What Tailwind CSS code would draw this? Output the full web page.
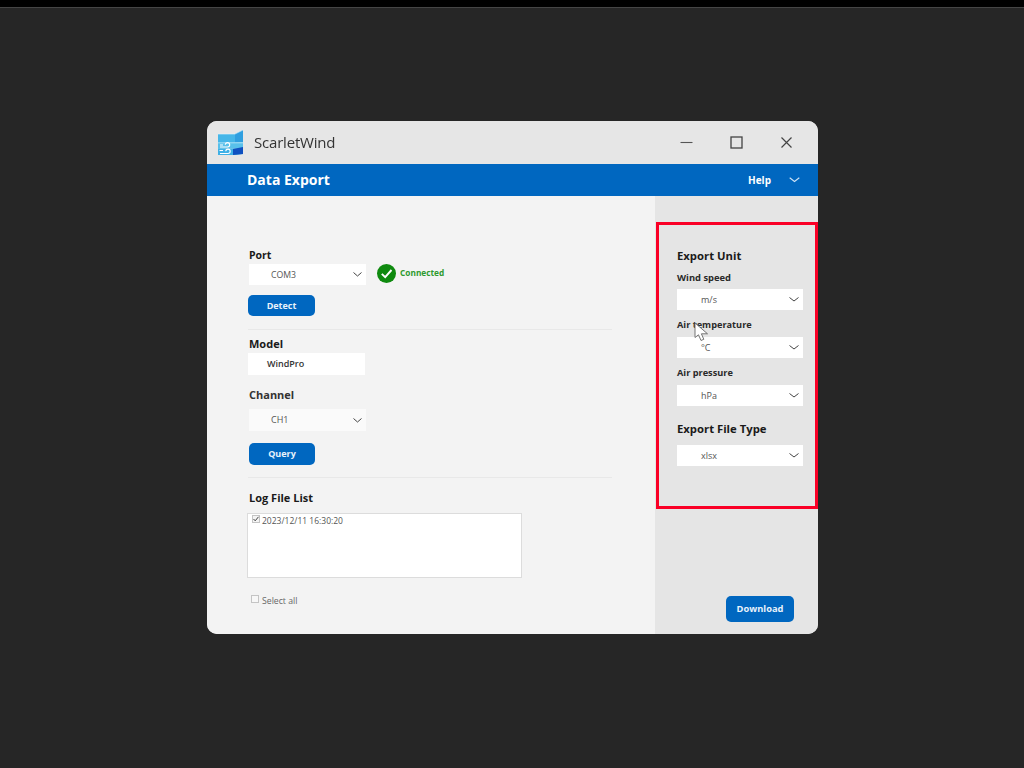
<!DOCTYPE html>
<html>
<head>
<meta charset="utf-8">
<script src="https://cdn.jsdelivr.net/npm/@tailwindcss/browser@4"></script>
</head>
<body class="w-[1024px] h-[768px] overflow-hidden bg-[#262626] font-['Open_Sans','Noto_Sans',sans-serif]">
<div class="h-[7px] bg-black"></div>
<div class="h-px bg-[#454545]"></div>
<div class="relative w-[611px] h-[513px] ml-[207px] mt-[113px] rounded-[10px] overflow-hidden flex flex-col bg-[#f3f3f3] blur-[0.35px]">
  <!-- title bar -->
  <div class="h-[43px] bg-[#e6e6e6] flex items-center pl-[11px]">
    <svg class="w-[26px] h-[27px]" viewBox="0 0 26 27">
      <path d="M0 5 L17 5 L25 1 L25 13 L17 14 L0 14Z" fill="#45b6e8"/>
      <path d="M17 5 L25 1 L25 13 L17 14Z" fill="#2f9fe0"/>
      <path d="M0 14 L25 13 L25 19 L0 20Z" fill="#58c0ea"/>
      <path d="M0 20 L25 19 L25 25 L17 26 L0 26Z" fill="#3fb0e6"/>
      <path d="M15 20 L25 18 L25 25 L15 26Z" fill="#0f50c0"/>
      <path d="M0 5 H17 L25 1 M0 13.8 H25" stroke="#e8f6fd" stroke-width="0.6" fill="none"/>
      <path d="M2 18 H9.5 a2.2 2.2 0 1 0 -2.2 -2.2 M2 16 H5 M1.5 21.5 H5 M2 24.5 H10 a2.2 2.2 0 1 0 -2.2 -2.2" stroke="#fff" stroke-width="1.1" fill="none"/>
    </svg>
    <span class="ml-[10px] text-[15px] leading-none text-[#333] tracking-[-0.2px]">ScarletWind</span>
    <div class="ml-auto flex items-center pr-[25px] gap-[37px]">
      <svg class="w-[13px] h-[13px]" viewBox="0 0 13 13"><path d="M0.5 6.5 H12.5" stroke="#555" stroke-width="1.1"/></svg>
      <svg class="w-[13px] h-[13px]" viewBox="0 0 13 13"><rect x="1" y="1" width="11" height="11" fill="none" stroke="#444" stroke-width="1.3"/></svg>
      <svg class="w-[13px] h-[13px]" viewBox="0 0 13 13"><path d="M1.5 1.5 L11.5 11.5 M11.5 1.5 L1.5 11.5" stroke="#444" stroke-width="1.2"/></svg>
    </div>
  </div>
  <!-- blue header -->
  <div class="h-[32px] bg-[#0067c0] flex items-center pl-[40px] pr-[18px] text-white">
    <span class="text-[14px] font-bold leading-none">Data Export</span>
    <span class="ml-auto text-[10px] font-bold leading-none">Help</span>
    <svg class="ml-[18px] w-[11px] h-[6px]" viewBox="0 0 11 6"><path d="M0.7 0.7 L5.5 4.5 L10.3 0.7" fill="none" stroke="#cfe3f5" stroke-width="1.1"/></svg>
  </div>
  <div class="flex-1 flex min-h-0">
    <!-- left pane -->
    <div class="w-[448px] bg-[#f3f3f3] pl-[41px] pt-[51px]">
      <div class="pl-px text-[10.5px] font-bold leading-4 text-[#1a1a1a]">Port</div>
      <div class="flex items-center mt-px">
        <div class="ml-px w-[117px] h-[21px] bg-white flex items-center pl-[22px] pr-[4px] text-[8.7px] text-[#555]">
          <span class="mt-[3px]">COM3</span>
          <svg class="ml-auto w-[9px] h-[5px]" viewBox="0 0 9 5"><path d="M0.5 0.5 L4.5 4 L8.5 0.5" fill="none" stroke="#444" stroke-width="1"/></svg>
        </div>
        <svg class="ml-[11px] w-[19px] h-[19px] -mt-[3px]" viewBox="0 0 19 19"><circle cx="9.5" cy="9.5" r="9.5" fill="#0f8a0f"/><path d="M4.8 9.8 L8.2 13.2 L14.5 6" fill="none" stroke="#fff" stroke-width="1.9"/></svg>
        <span class="ml-[4px] -mt-[3px] text-[8.3px] font-bold text-[#2e9a2e]">Connected</span>
      </div>
      <div class="mt-[10px] w-[67px] h-[21px] rounded-[5px] bg-[#0067c0] flex items-center justify-center text-[9px] font-bold text-[#e8f2fb]">Detect</div>
      <div class="mt-[13px] h-px w-[364px] bg-[#e8e8e8]"></div>
      <div class="mt-[6px] pb-px pl-px text-[11px] font-bold leading-4 text-[#1a1a1a]">Model</div>
      <div class="w-[117px] h-[22px] bg-white flex items-center pl-[19px] text-[9px] font-semibold text-[#333]">WindPro</div>
      <div class="mt-[12px] pl-px text-[11px] font-bold leading-4 text-[#333]">Channel</div>
      <div class="mt-[6px] ml-px w-[117px] h-[22px] bg-[#fafafa] flex items-center pl-[22px] pr-[4px] text-[9px] text-[#555]">
        <span>CH1</span>
        <svg class="ml-auto w-[9px] h-[5px]" viewBox="0 0 9 5"><path d="M0.5 0.5 L4.5 4 L8.5 0.5" fill="none" stroke="#444" stroke-width="1"/></svg>
      </div>
      <div class="mt-[12px] ml-px w-[66px] h-[22px] rounded-[5px] bg-[#0067c0] flex items-center justify-center text-[9px] font-bold text-[#e8f2fb]">Query</div>
      <div class="mt-[12px] h-px w-[364px] bg-[#e8e8e8]"></div>
      <div class="mt-[12px] pl-px text-[11px] font-bold leading-4 text-[#1a1a1a]">Log File List</div>
      <div class="mt-[7px] -ml-px w-[275px] h-[65px] bg-white border border-[#dcdcdc] pl-[4px] pt-px flex items-start text-[8.5px] leading-[11px] text-[#555]">
        <div class="w-[8px] h-[8px] bg-[#f4f4f4] border border-[#c4c4c4] flex items-center justify-center">
          <svg class="w-[8px] h-[8px] shrink-0" viewBox="0 0 8 8"><path d="M1.5 4 L3.2 5.8 L6.5 1.8" fill="none" stroke="#444" stroke-width="1"/></svg>
        </div>
        <span class="ml-[2px]">2023/12/11 16:30:20</span>
      </div>
      <div class="mt-[17px] ml-[3px] flex items-start text-[8.7px] leading-[11px] text-[#666]">
        <div class="w-[8px] h-[8px] bg-[#f7f7f7] border border-[#c4c4c4]"></div>
        <span class="ml-[3px] mt-[1px]">Select all</span>
      </div>
    </div>
    <!-- right pane -->
    <div class="flex-1 bg-[#e5e5e5] pl-[22px] pr-[15px] pt-[52px] flex flex-col">
      <div class="text-[11.3px] font-bold leading-4 text-[#1a1a1a]">Export Unit</div>
      <div class="mt-[6px] text-[9.4px] font-bold leading-4 text-[#2a2a2a]">Wind speed</div>
      <div class="mt-[3px] h-[21px] bg-white flex items-center pl-[24px] pr-[4px] text-[9px] text-[#555]"><span>m/s</span><svg class="ml-auto w-[10px] h-[5px]" viewBox="0 0 10 5"><path d="M0.5 0.5 L5 4 L9.5 0.5" fill="none" stroke="#444" stroke-width="1"/></svg></div>
      <div class="mt-[7px] text-[9.2px] font-bold leading-4 text-[#2a2a2a]">Air temperature</div>
      <div class="mt-[4px] h-[21px] bg-white flex items-center pl-[24px] pr-[4px] text-[9px] text-[#555]"><span>°C</span><svg class="ml-auto w-[10px] h-[5px]" viewBox="0 0 10 5"><path d="M0.5 0.5 L5 4 L9.5 0.5" fill="none" stroke="#444" stroke-width="1"/></svg></div>
      <div class="mt-[7px] text-[9.2px] font-bold leading-4 text-[#2a2a2a]">Air pressure</div>
      <div class="mt-[4px] h-[21px] bg-white flex items-center pl-[24px] pr-[4px] text-[9px] text-[#555]"><span>hPa</span><svg class="ml-auto w-[10px] h-[5px]" viewBox="0 0 10 5"><path d="M0.5 0.5 L5 4 L9.5 0.5" fill="none" stroke="#444" stroke-width="1"/></svg></div>
      <div class="mt-[15px] text-[11.3px] font-bold leading-4 text-[#1a1a1a]">Export File Type</div>
      <div class="mt-[8px] h-[21px] bg-white flex items-center pl-[24px] pr-[4px] text-[9px] text-[#555]"><span>xlsx</span><svg class="ml-auto w-[10px] h-[5px]" viewBox="0 0 10 5"><path d="M0.5 0.5 L5 4 L9.5 0.5" fill="none" stroke="#444" stroke-width="1"/></svg></div>
      <div class="mt-auto mb-[12px] ml-[49px] w-[68px] h-[26px] rounded-[5px] bg-[#0067c0] flex items-center justify-center text-[9.3px] font-bold text-[#e8f2fb]">Download</div>
    </div>
  </div>
  <!-- red highlight overlay -->
  <div class="absolute left-[449px] top-[101px] w-[162px] h-[287px] border-[3px] border-[#fa0026]"></div>
  <!-- mouse cursor -->
  <svg class="absolute left-[487px] top-[201px] w-[15px] h-[20px]" viewBox="0 0 15 20"><path d="M1 1 L1 15.5 L4.5 12.8 L7 18.5 L9.8 17.3 L7.4 11.8 L13.5 11.8Z" fill="#fff" stroke="#666" stroke-width="0.9"/></svg>
</div>
</body>
</html>
